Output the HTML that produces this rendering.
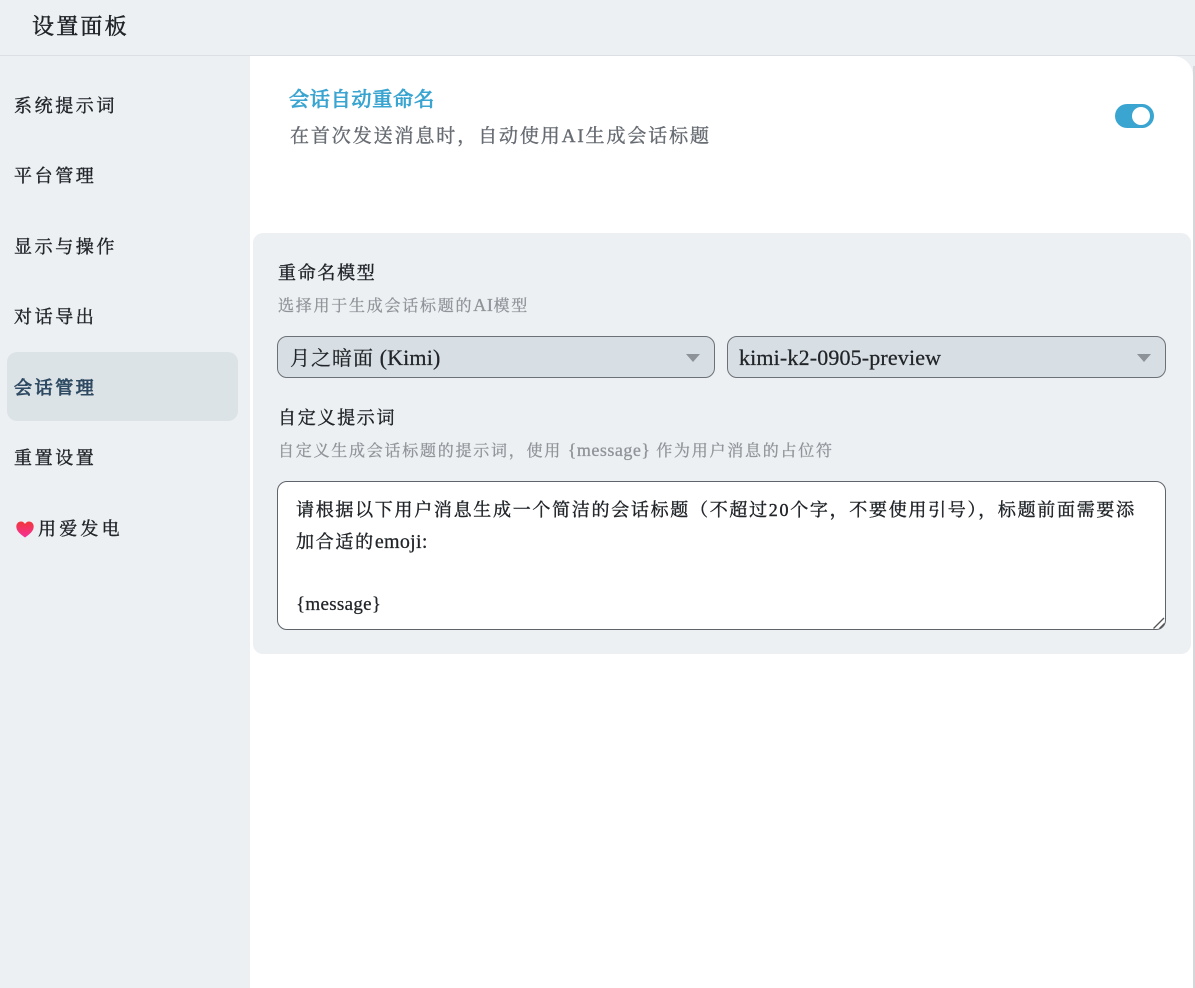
<!DOCTYPE html>
<html lang="zh"><head><meta charset="utf-8"><title>设置面板</title>
<style>
html,body{margin:0;padding:0;width:1195px;height:988px;overflow:hidden;background:#ecf0f3}
body{position:relative;font-family:"Liberation Serif","Noto Serif CJK SC",serif;font-weight:400;color:#212529;-webkit-text-stroke:.4px}
.a{position:absolute;white-space:nowrap;line-height:1}
.nav{left:14px;font-size:18px;letter-spacing:2.6px;color:#212529}
.lbl{font-size:18px;letter-spacing:1.7px;left:278px;color:#212529}
.sub{font-size:16px;letter-spacing:1.75px;left:278px;color:#909499;-webkit-text-stroke:.3px}
.sub i{font-style:normal;font-size:18px;letter-spacing:.5px}
.sub u{text-decoration:none;font-size:18px;letter-spacing:.6px}
.sel{position:absolute;top:336px;height:40px;border:1px solid #6c7178;border-radius:10px;background:#d8dfe4}
.sel b{position:absolute;right:14px;top:17px;width:0;height:0;border-left:7px solid transparent;border-right:7px solid transparent;border-top:8px solid #8d9299}
.sel span{position:absolute;left:12px;top:10px;font-size:22px;letter-spacing:.15px;line-height:1;white-space:nowrap;color:#212529;-webkit-text-stroke:.25px}
.sel em{font-style:normal;font-size:20px;letter-spacing:1px}
.ta{position:absolute;left:296px;font-size:18px;letter-spacing:1.7px;line-height:1;white-space:nowrap;color:#212529}
.ta i{font-style:normal;font-size:20px;letter-spacing:.3px;-webkit-text-stroke:.25px}
</style></head><body>
<div class="a" style="left:0;top:55px;width:1195px;height:1px;background:#dcdfe3"></div>
<div class="a" style="left:32px;top:16px;font-size:22px;letter-spacing:2.2px;color:#212529;-webkit-text-stroke:.5px">设置面板</div>

<div class="a" style="left:250px;top:56px;width:943px;height:932px;background:#fff;border-top-right-radius:20px"></div>
<div class="a" style="left:1193px;top:66px;width:2px;height:922px;background:#d5d7da"></div>

<div class="a nav" style="top:97px">系统提示词</div>
<div class="a nav" style="top:167px">平台管理</div>
<div class="a nav" style="top:238px">显示与操作</div>
<div class="a nav" style="top:308px">对话导出</div>
<div class="a" style="left:7px;top:352px;width:231px;height:69px;background:#dce3e6;border-radius:10px"></div>
<div class="a nav" style="top:379px;color:#2f4a63;-webkit-text-stroke:.9px">会话管理</div>
<div class="a nav" style="top:449px">重置设置</div>
<svg class="a" style="left:16px;top:521px" width="18" height="17" viewBox="0 0 18 17"><defs><linearGradient id="h" x1="0" y1="0" x2="0" y2="1"><stop offset="0" stop-color="#f0383a"/><stop offset="1" stop-color="#f72f9a"/></linearGradient></defs><path d="M9 16.500C5 13.500.3 10.500.3 5.500.3 2.500 2.500.5 5 .5c1.800 0 3.200 1 4 2.500C9.800 1.500 11.200.5 13 .5c2.500 0 4.700 2 4.700 5 0 5-4.700 8-8.700 11z" fill="url(#h)"/></svg>
<div class="a nav" style="left:38px;top:520px;letter-spacing:3.2px">用爱发电</div>

<div class="a" style="left:289px;top:90px;font-size:20px;letter-spacing:.85px;color:#3ba5d1;-webkit-text-stroke:.9px">会话自动重命名</div>
<div class="a" style="left:290px;top:127px;font-size:19px;letter-spacing:1.9px;color:#666b72">在首次发送消息时，自动使用AI生成会话标题</div>
<div class="a" style="left:1115px;top:104px;width:39px;height:24px;border-radius:12px;background:#3ba5d1"></div>
<div class="a" style="left:1132px;top:107px;width:18px;height:18px;border-radius:50%;background:#fff"></div>

<div class="a" style="left:253px;top:233px;width:938px;height:421px;background:#ecf0f3;border-radius:10px"></div>
<div class="a lbl" style="top:264px">重命名模型</div>
<div class="a sub" style="top:296px">选择用于生成会话标题的<u>AI</u>模型</div>
<div class="sel" style="left:277px;width:436px"><span><em>月之暗面</em> (Kimi)</span><b></b></div>
<div class="sel" style="left:727px;width:437px"><span style="left:11px">kimi-k2-0905-preview</span><b></b></div>
<div class="a lbl" style="top:409px">自定义提示词</div>
<div class="a sub" style="top:441px">自定义生成会话标题的提示词，使用 <i>{message}</i> 作为用户消息的占位符</div>

<div class="a" style="left:277px;top:481px;width:887px;height:147px;border:1px solid #5f646b;border-radius:10px;background:#fff"></div>
<div class="ta" style="top:501px">请根据以下用户消息生成一个简洁的会话标题（不超过20个字，不要使用引号），标题前面需要添</div>
<div class="ta" style="top:532px">加合适的<i>emoji:</i></div>
<div class="ta" style="top:595px"><i style="font-size:19px">{message}</i></div>
<svg class="a" style="left:1152px;top:616px" width="14" height="14" viewBox="0 0 14 14"><path d="M1.500 12.500 12 2M7.500 12.500 12.500 7.500" stroke="#555" stroke-width="1.300" fill="none"/></svg>
</body></html>
